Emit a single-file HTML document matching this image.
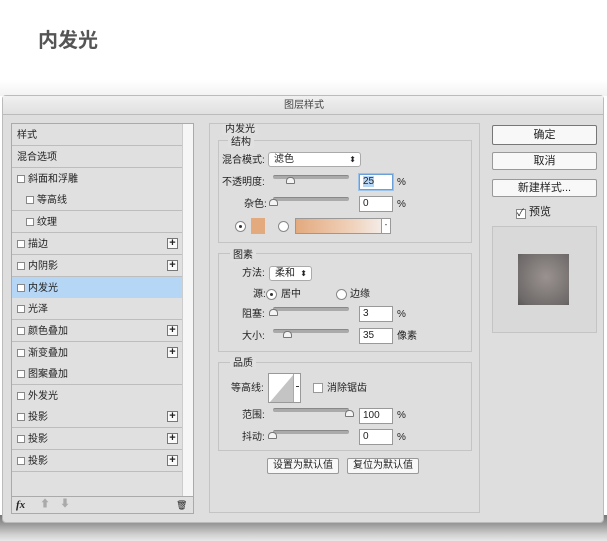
<!DOCTYPE html>
<html><head><meta charset="utf-8"><style>
*{margin:0;padding:0;box-sizing:border-box}
body{width:607px;height:541px;background:#fff;position:relative;overflow:hidden;font-family:"Liberation Sans","Noto Sans CJK SC",sans-serif;font-size:10px;color:#222}
.a{position:absolute}
.t{position:absolute;white-space:nowrap;line-height:12px;font-size:10px}
.row{position:absolute;left:12px;width:170px;height:22px;border-bottom:1px solid #bdbdbd;background:#e0e0e0}
.row span{position:absolute;top:6px;left:5px;font-size:10px;line-height:12px;white-space:nowrap}
.cb{display:inline-block;width:8px;height:8px;border:1px solid #888;background:#fff;margin-right:3px;vertical-align:-1px}
.plus{position:absolute;right:4px;top:5px;width:11px;height:11px;border:1px solid #777;background:#fafafa;font-size:11px;line-height:8px;text-align:center;font-weight:bold}
.box{position:absolute;border:1px solid #c4c4c4}
.inp{position:absolute;width:34px;height:16px;background:#fff;border:1px solid #999;font-size:10px;line-height:14px;padding-left:3px}
.sl{position:absolute;width:76px;height:4px;background:#aaa;border-radius:2px;border-top:1px solid #888}
.th{position:absolute;width:9px;height:7px;background:#f4f4f4;border:1px solid #777;border-radius:4px 4px 1px 1px}
.sel{position:absolute;height:15px;background:#fff;border:1px solid #aaa;border-radius:3px;font-size:10px;line-height:13px;padding-left:5px}
.sel:after{content:"⬍";position:absolute;right:4px;top:0;font-size:8px}
.rad{position:absolute;width:11px;height:11px;border-radius:50%;border:1px solid #888;background:#fff}
.btn{position:absolute;height:18px;background:#f8f8f8;border:1px solid #999;text-align:center;font-size:11px;line-height:16px;border-radius:2px}
.lbl{position:absolute;background:#e0e0e0;padding:0 3px;font-size:10px;line-height:11px}
</style></head><body>
<div class="t" style="left:38px;top:30px;font-size:20px;line-height:22px;font-weight:bold;color:#555">内发光</div>
<div class="a" style="left:0;top:80px;width:607px;height:16px;background:linear-gradient(#fff,#f2f2f2)"></div>
<div class="a" style="left:0;top:515px;width:607px;height:26px;background:linear-gradient(#777,#999 35%,#d0d0d0 75%,#e8e8e8)"></div>
<div class="a" style="left:2px;top:95px;width:602px;height:428px;background:#dedede;border:1px solid #bbb;border-radius:4px"></div>
<div class="a" style="left:3px;top:96px;width:600px;height:19px;background:linear-gradient(#f0f0f0,#e0e0e0);border-bottom:1px solid #bbb"></div>
<div class="t" style="left:284px;top:100px;color:#444">图层样式</div>
<!-- left list -->
<div class="a" style="left:11px;top:123px;width:183px;height:391px;border:1px solid #aaa;background:#e0e0e0"></div>
<div class="a" style="left:182px;top:124px;width:11px;height:373px;background:#f6f6f6;border-left:1px solid #ccc"></div>
<div class="row" style="top:124px"><span>样式</span></div>
<div class="row" style="top:146px"><span>混合选项</span></div>
<div class="row" style="top:168px"><span><i class="cb"></i>斜面和浮雕</span></div>
<div class="row" style="top:189px"><span style="left:14px"><i class="cb"></i>等高线</span></div>
<div class="row" style="top:211px"><span style="left:14px"><i class="cb"></i>纹理</span></div>
<div class="row" style="top:233px"><span><i class="cb"></i>描边</span><b class="plus">+</b></div>
<div class="row" style="top:255px"><span><i class="cb"></i>内阴影</span><b class="plus">+</b></div>
<div class="row" style="top:277px;background:#b6d6f5"><span><i class="cb"></i>内发光</span></div>
<div class="row" style="top:298px"><span><i class="cb"></i>光泽</span></div>
<div class="row" style="top:320px"><span><i class="cb"></i>颜色叠加</span><b class="plus">+</b></div>
<div class="row" style="top:342px"><span><i class="cb"></i>渐变叠加</span><b class="plus">+</b></div>
<div class="row" style="top:363px"><span><i class="cb"></i>图案叠加</span></div>
<div class="row" style="top:385px"><span><i class="cb"></i>外发光</span></div>
<div class="row" style="top:406px"><span><i class="cb"></i>投影</span><b class="plus">+</b></div>
<div class="row" style="top:428px"><span><i class="cb"></i>投影</span><b class="plus">+</b></div>
<div class="row" style="top:450px"><span><i class="cb"></i>投影</span><b class="plus">+</b></div>
<div class="a" style="left:12px;top:496px;width:181px;height:1px;background:#aaa"></div>
<div class="t" style="left:16px;top:499px;font-family:'Liberation Serif',serif;font-style:italic;font-weight:bold;font-size:11px">fx</div>
<div class="t" style="left:40px;top:499px;color:#aaa">⬆</div><div class="t" style="left:60px;top:499px;color:#aaa">⬇</div>
<div class="t" style="left:176px;top:499px;font-size:9px">🗑</div>
<!-- middle -->
<div class="box" style="left:209px;top:123px;width:271px;height:390px"></div>
<div class="lbl" style="left:222px;top:124px">内发光</div>
<div class="box" style="left:218px;top:140px;width:254px;height:103px"></div>
<div class="lbl" style="left:228px;top:137px">结构</div>
<div class="t" style="left:222px;top:155px">混合模式:</div>
<div class="sel" style="left:268px;top:152px;width:93px">滤色</div>
<div class="t" style="left:222px;top:177px">不透明度:</div>
<div class="sl" style="left:273px;top:175px"></div><div class="th" style="left:286px;top:177px"></div>
<div class="inp" style="left:359px;top:174px;border-color:#6a9fd8;box-shadow:0 0 0 1px #9cc3ea"><span style="background:#b6d6f5">25</span></div><div class="t" style="left:397px;top:177px">%</div>
<div class="t" style="left:244px;top:199px">杂色:</div>
<div class="sl" style="left:273px;top:197px"></div><div class="th" style="left:269px;top:199px"></div>
<div class="inp" style="left:359px;top:196px">0</div><div class="t" style="left:397px;top:199px">%</div>
<div class="rad" style="left:235px;top:221px"><i class="a" style="left:3px;top:3px;width:3px;height:3px;background:#333;border-radius:50%"></i></div>
<div class="a" style="left:251px;top:218px;width:14px;height:16px;background:#e3aa7e"></div>
<div class="rad" style="left:278px;top:221px"></div>
<div class="a" style="left:295px;top:218px;width:96px;height:16px;border:1px solid #999;background:linear-gradient(90deg,#e3aa7e,#f0d2bc 60%,#f4f4f4)"></div>
<div class="a" style="left:381px;top:218px;width:10px;height:16px;background:#fff;border:1px solid #999;font-size:8px;text-align:center;line-height:12px">-</div>
<div class="box" style="left:218px;top:253px;width:254px;height:99px"></div>
<div class="lbl" style="left:230px;top:250px">图素</div>
<div class="t" style="left:242px;top:268px">方法:</div>
<div class="sel" style="left:269px;top:266px;width:43px">柔和</div>
<div class="t" style="left:253px;top:289px">源:</div>
<div class="rad" style="left:266px;top:289px"><i class="a" style="left:3px;top:3px;width:3px;height:3px;background:#333;border-radius:50%"></i></div>
<div class="t" style="left:281px;top:289px">居中</div>
<div class="rad" style="left:336px;top:289px"></div><div class="t" style="left:350px;top:289px">边缘</div>
<div class="t" style="left:242px;top:309px">阻塞:</div>
<div class="sl" style="left:273px;top:307px"></div><div class="th" style="left:269px;top:309px"></div>
<div class="inp" style="left:359px;top:306px">3</div><div class="t" style="left:397px;top:309px">%</div>
<div class="t" style="left:242px;top:331px">大小:</div>
<div class="sl" style="left:273px;top:329px"></div><div class="th" style="left:283px;top:331px"></div>
<div class="inp" style="left:359px;top:328px">35</div><div class="t" style="left:397px;top:331px">像素</div>
<div class="box" style="left:218px;top:362px;width:254px;height:89px"></div>
<div class="lbl" style="left:230px;top:358px">品质</div>
<div class="t" style="left:231px;top:383px">等高线:</div>
<div class="a" style="left:268px;top:373px;width:33px;height:30px;background:#fff;border:1px solid #999"><svg width="24" height="28" style="position:absolute;left:1px;top:0"><polygon points="0,28 24,0 24,28" fill="#c4c4c4"/></svg><i class="a" style="left:24px;top:0;width:1px;height:28px;background:#aaa"></i><i class="a" style="left:27px;top:12px;width:3px;height:1px;background:#333"></i></div>
<div class="a" style="left:313px;top:383px;width:10px;height:10px;border:1px solid #999;background:#fff"></div>
<div class="t" style="left:327px;top:383px">消除锯齿</div>
<div class="t" style="left:242px;top:410px">范围:</div>
<div class="sl" style="left:273px;top:408px"></div><div class="th" style="left:345px;top:410px"></div>
<div class="inp" style="left:359px;top:408px">100</div><div class="t" style="left:397px;top:410px">%</div>
<div class="t" style="left:242px;top:432px">抖动:</div>
<div class="sl" style="left:273px;top:430px"></div><div class="th" style="left:268px;top:432px"></div>
<div class="inp" style="left:359px;top:429px">0</div><div class="t" style="left:397px;top:432px">%</div>
<div class="btn" style="left:267px;top:458px;width:72px;height:16px;font-size:10px;line-height:14px">设置为默认值</div>
<div class="btn" style="left:347px;top:458px;width:72px;height:16px;font-size:10px;line-height:14px">复位为默认值</div>
<!-- right -->
<div class="btn" style="left:492px;top:125px;width:105px;height:20px;border-color:#777;line-height:18px">确定</div>
<div class="btn" style="left:492px;top:152px;width:105px;line-height:16px">取消</div>
<div class="btn" style="left:492px;top:179px;width:105px;line-height:16px">新建样式...</div>
<div class="t" style="left:516px;top:206px;font-size:11px"><i class="cb" style="width:10px;height:10px;font-style:normal;font-size:10px;line-height:8px">✓</i>预览</div>
<div class="box" style="left:492px;top:226px;width:105px;height:107px;background:#d9d9d9"></div>
<div class="a" style="left:518px;top:254px;width:51px;height:51px;background:radial-gradient(circle at 55% 45%,#9a9290,#6e6a69 80%,#5a5756)"></div>
</body></html>
